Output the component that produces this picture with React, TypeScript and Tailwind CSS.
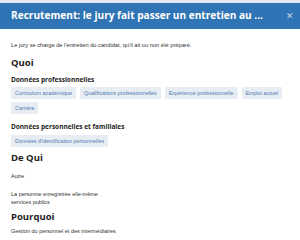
export default function App() {
  const pro = [
    "Curriculum académique",
    "Qualifications professionnelles",
    "Expérience professionnelle",
    "Emploi actuel",
    "Carrière",
  ];
  const perso = ["Données d'identification personnelles"];

  const tag = (t: string) => (
    <span
      key={t}
      className="bg-[#e8edf3] text-[#4f7db5] text-[5.4px] leading-[12px] h-[12px] px-[4px] rounded-[1px]"
    >
      {t}
    </span>
  );

  return (
    <div className="w-[300px] h-[240px] overflow-hidden bg-white font-['Liberation_Sans',Arial,sans-serif] text-[#333]">
      <div className="h-[3px] bg-[#e3e8ee]" />
      {/* En-tête */}
      <div className="h-[26px] bg-[#2f74b5] flex items-center justify-between pl-[11px] pr-[6px]">
        <span className="font-['Open_Sans',sans-serif] font-bold text-white text-[10.1px] whitespace-nowrap">
          Recrutement: le jury fait passer un entretien au ...
        </span>
        <span className="text-[#c8d8ea] text-[9px] leading-none">✕</span>
      </div>

      <div className="px-[11px] pt-[13px]">
        <p className="text-[5.7px] leading-[7px]">
          Le jury se charge de l'entretien du candidat, qu'il ait ou non été préparé.
        </p>

        <h2 className="font-['Open_Sans',sans-serif] font-bold text-[9.5px] leading-[12px] text-[#222] mt-[8px]">Quoi</h2>
        <h3 className="font-['Open_Sans',sans-serif] font-bold text-[6.5px] leading-[8px] text-[#222] mt-[7px]">
          Données professionnelles
        </h3>
        <div className="flex flex-wrap gap-x-[4px] gap-y-[3px] mt-[3px]">{pro.map(tag)}</div>

        <h3 className="font-['Open_Sans',sans-serif] font-bold text-[6.5px] leading-[8px] text-[#222] mt-[9px]">
          Données personnelles et familiales
        </h3>
        <div className="flex flex-wrap gap-[4px] mt-[4px]">{perso.map(tag)}</div>

        <h2 className="font-['Open_Sans',sans-serif] font-bold text-[9.5px] leading-[12px] text-[#222] mt-[5px]">De Qui</h2>
        <p className="text-[5.5px] leading-[7px] mt-[9px]">Autre</p>
        <p className="text-[5.5px] leading-[8px] mt-[10px]">
          La personne enregistrée elle-même
          <br />
          services publics
        </p>

        <h2 className="font-['Open_Sans',sans-serif] font-bold text-[9.5px] leading-[12px] text-[#222] mt-[5px]">Pourquoi</h2>
        <p className="text-[5.5px] leading-[7px] mt-[5px]">Gestion du personnel et des intermédiaires</p>
      </div>
    </div>
  );
}
